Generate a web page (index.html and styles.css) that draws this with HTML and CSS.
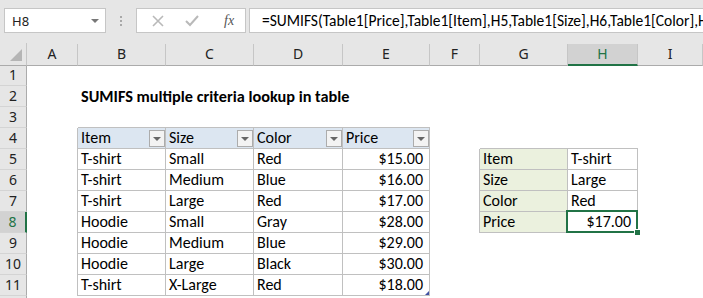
FILE: index.html
```html
<!DOCTYPE html>
<html lang="en">
<head>
  <meta charset="UTF-8">
  <title>SUMIFS multiple criteria lookup</title>
  <link rel="stylesheet" href="styles.css">
</head>
<body>

  <div class="toolbar">
    <div class="namebox">
      <span>H8</span>
      <span class="caret"></span>
    </div>
    <div class="grip"><i></i><i></i><i></i></div>
    <div class="fxbox">
      <svg width="14" height="14" viewBox="0 0 14 14"><path d="M2 2 L12 12 M12 2 L2 12" stroke="#b9b9b9" stroke-width="1.6" fill="none"/></svg>
      <svg width="16" height="14" viewBox="0 0 16 14"><path d="M2 7 L6 11 L14 2" stroke="#b9b9b9" stroke-width="2" fill="none"/></svg>
      <span class="fx">fx</span>
    </div>
    <div class="formula">=SUMIFS(Table1[Price],Table1[Item],H5,Table1[Size],H6,Table1[Color],H7)</div>
  </div>

  <div class="sheet">
    <div class="row head">
      <div class="corner"><span class="tri"></span></div>
      <div class="col">A</div>
      <div class="col">B</div>
      <div class="col">C</div>
      <div class="col">D</div>
      <div class="col">E</div>
      <div class="col">F</div>
      <div class="col">G</div>
      <div class="col active">H</div>
      <div class="col">I</div>
    </div>

    <div class="row">
      <div class="num">1</div>
      <div></div><div></div><div></div><div></div><div></div><div></div><div></div><div></div><div></div>
    </div>

    <div class="row">
      <div class="num">2</div>
      <div></div>
      <div class="cell title">SUMIFS multiple criteria lookup in table</div>
      <div></div><div></div><div></div><div></div><div></div><div></div><div></div>
    </div>

    <div class="row">
      <div class="num">3</div>
      <div></div>
      <div class="tb"></div><div class="tb"></div><div class="tb"></div><div class="tb"></div>
      <div></div><div></div><div></div><div></div>
    </div>

    <div class="row">
      <div class="num">4</div>
      <div class="tr"></div>
      <div class="cell tc th">Item<span class="filter"></span></div>
      <div class="cell tc th">Size<span class="filter"></span></div>
      <div class="cell tc th">Color<span class="filter"></span></div>
      <div class="cell tc th">Price<span class="filter"></span></div>
      <div></div>
      <div class="tb"></div><div class="tb"></div><div></div>
    </div>

    <div class="row">
      <div class="num">5</div>
      <div class="tr"></div>
      <div class="cell tc">T-shirt</div>
      <div class="cell tc">Small</div>
      <div class="cell tc">Red</div>
      <div class="cell tc num-r">$15.00</div>
      <div class="tr"></div>
      <div class="cell tc label">Item</div>
      <div class="cell tc">T-shirt</div>
      <div></div>
    </div>

    <div class="row">
      <div class="num">6</div>
      <div class="tr"></div>
      <div class="cell tc">T-shirt</div>
      <div class="cell tc">Medium</div>
      <div class="cell tc">Blue</div>
      <div class="cell tc num-r">$16.00</div>
      <div class="tr"></div>
      <div class="cell tc label">Size</div>
      <div class="cell tc">Large</div>
      <div></div>
    </div>

    <div class="row">
      <div class="num">7</div>
      <div class="tr"></div>
      <div class="cell tc">T-shirt</div>
      <div class="cell tc">Large</div>
      <div class="cell tc">Red</div>
      <div class="cell tc num-r">$17.00</div>
      <div class="tr"></div>
      <div class="cell tc label">Color</div>
      <div class="cell tc">Red</div>
      <div></div>
    </div>

    <div class="row">
      <div class="num active">8</div>
      <div class="tr"></div>
      <div class="cell tc">Hoodie</div>
      <div class="cell tc">Small</div>
      <div class="cell tc">Gray</div>
      <div class="cell tc num-r">$28.00</div>
      <div class="tr"></div>
      <div class="cell tc label">Price</div>
      <div class="cell tc num-r selected">$17.00</div>
      <div></div>
    </div>

    <div class="row">
      <div class="num">9</div>
      <div class="tr"></div>
      <div class="cell tc">Hoodie</div>
      <div class="cell tc">Medium</div>
      <div class="cell tc">Blue</div>
      <div class="cell tc num-r">$29.00</div>
      <div></div><div></div><div></div><div></div>
    </div>

    <div class="row">
      <div class="num">10</div>
      <div class="tr"></div>
      <div class="cell tc">Hoodie</div>
      <div class="cell tc">Large</div>
      <div class="cell tc">Black</div>
      <div class="cell tc num-r">$30.00</div>
      <div></div><div></div><div></div><div></div>
    </div>

    <div class="row">
      <div class="num">11</div>
      <div class="tr"></div>
      <div class="cell tc">T-shirt</div>
      <div class="cell tc">X-Large</div>
      <div class="cell tc">Red</div>
      <div class="cell tc num-r last">$18.00</div>
      <div></div><div></div><div></div><div></div>
    </div>

    <div class="row">
      <div class="num"></div>
      <div></div><div></div><div></div><div></div><div></div><div></div><div></div><div></div><div></div>
    </div>
  </div>

</body>
</html>
```

FILE: styles.css
```css
body {
  margin: 0;
  width: 703px;
  height: 298px;
  overflow: hidden;
  background: #ffffff;
  font-family: "Carlito", "Lato", sans-serif;
  color: #000;
}

/* formula bar */
.toolbar {
  height: 43px;
  box-sizing: border-box;
  padding: 8px 0 0 4px;
  background: #e6e6e6;
  display: flex;
  align-items: flex-start;
}

.namebox {
  width: 102px;
  height: 25px;
  box-sizing: border-box;
  border: 1px solid #c6c6c6;
  background: #fff;
  display: flex;
  align-items: center;
  justify-content: space-between;
  padding: 0 6px 0 7px;
  font-family: "Noto Sans", sans-serif;
  font-size: 13px;
  color: #222;
}

.caret {
  width: 0;
  height: 0;
  border-left: 4px solid transparent;
  border-right: 4px solid transparent;
  border-top: 4px solid #777;
}

.grip {
  width: 30px;
  height: 25px;
  display: flex;
  flex-direction: column;
  align-items: center;
  justify-content: center;
  gap: 2px;
}

.grip i {
  width: 2px;
  height: 2px;
  background: #a8a8a8;
}

.fxbox {
  width: 110px;
  height: 25px;
  box-sizing: border-box;
  border: 1px solid #c6c6c6;
  background: #fff;
  display: flex;
  align-items: center;
  padding-left: 14px;
  gap: 19px;
}

.fx {
  font-family: "Liberation Serif", serif;
  font-style: italic;
  font-size: 14px;
  color: #555;
  margin-left: 5px;
}

.formula {
  flex: 1;
  margin-left: 3px;
  height: 25px;
  box-sizing: border-box;
  border: 1px solid #c6c6c6;
  border-right: none;
  background: #fff;
  padding-left: 12px;
  font-size: 15.5px;
  line-height: 23px;
  white-space: nowrap;
  overflow: hidden;
}

/* grid */
.row {
  display: grid;
  grid-template-columns: 27px 51px 88px 88px 89px 87px 50px 88px 70px 1fr;
  height: 21px;
}

.row > div {
  box-sizing: border-box;
  min-width: 0;
}

.row.head {
  height: 22px;
  background: #e6e6e6;
}

.corner {
  border-right: 1px solid #c6c6c6;
  border-bottom: 1px solid #ababab;
  position: relative;
}

.tri {
  position: absolute;
  right: 4px;
  bottom: 4px;
  width: 0;
  height: 0;
  border-left: 12px solid transparent;
  border-bottom: 12px solid #b5b5b5;
}

.col {
  border-right: 1px solid #c6c6c6;
  border-bottom: 1px solid #ababab;
  margin-top: 1px;
  text-align: center;
  font-family: "Noto Sans", sans-serif;
  font-size: 14px;
  line-height: 20px;
  color: #222;
}

.col.active {
  background: #d2d2d2;
  color: #217346;
  border-bottom: 2px solid #217346;
}

.num {
  background: #e6e6e6;
  border-right: 1px solid #ababab;
  border-bottom: 1px solid #d4d4d4;
  text-align: center;
  font-family: "Noto Sans", sans-serif;
  font-size: 14px;
  line-height: 20px;
  color: #222;
}

.num.active {
  background: #d2d2d2;
  color: #217346;
  border-right: 2px solid #217346;
}

.cell {
  font-size: 16px;
  line-height: 20px;
  padding: 0 3px;
  white-space: nowrap;
}

.title {
  font-weight: bold;
  font-size: 16.3px;
  overflow: visible;
}

.tc {
  border-right: 1px solid #c0c0c0;
  border-bottom: 1px solid #c0c0c0;
  overflow: hidden;
}

.tb {
  border-bottom: 1px solid #c0c0c0;
}

.tr {
  border-right: 1px solid #c0c0c0;
}

.th {
  background: #dce6f1;
  display: flex;
  justify-content: space-between;
  align-items: flex-start;
  padding-right: 0;
}

.filter {
  width: 16px;
  height: 17px;
  box-sizing: border-box;
  margin-top: 2px;
  border: 1px solid #acacac;
  background: #f3f3f3;
  display: flex;
  align-items: center;
  justify-content: center;
}

.filter::after {
  content: "";
  width: 0;
  height: 0;
  border-left: 4px solid transparent;
  border-right: 4px solid transparent;
  border-top: 4px solid #666;
}

.num-r {
  text-align: right;
  padding-right: 6px;
}

.label {
  background: #ebf1de;
}

.selected {
  position: relative;
  overflow: visible;
}

.selected::after {
  content: "";
  position: absolute;
  left: -2px;
  top: -2px;
  right: -1px;
  bottom: -1px;
  border: 2px solid #217346;
}

.selected::before {
  content: "";
  position: absolute;
  right: -4px;
  bottom: -4px;
  width: 5px;
  height: 5px;
  background: #217346;
  border: 1px solid #fff;
  z-index: 1;
}

.last {
  position: relative;
}

.last::after {
  content: "";
  position: absolute;
  right: 0;
  bottom: 0;
  width: 0;
  height: 0;
  border-left: 4px solid transparent;
  border-bottom: 4px solid #3f51a3;
}
```
